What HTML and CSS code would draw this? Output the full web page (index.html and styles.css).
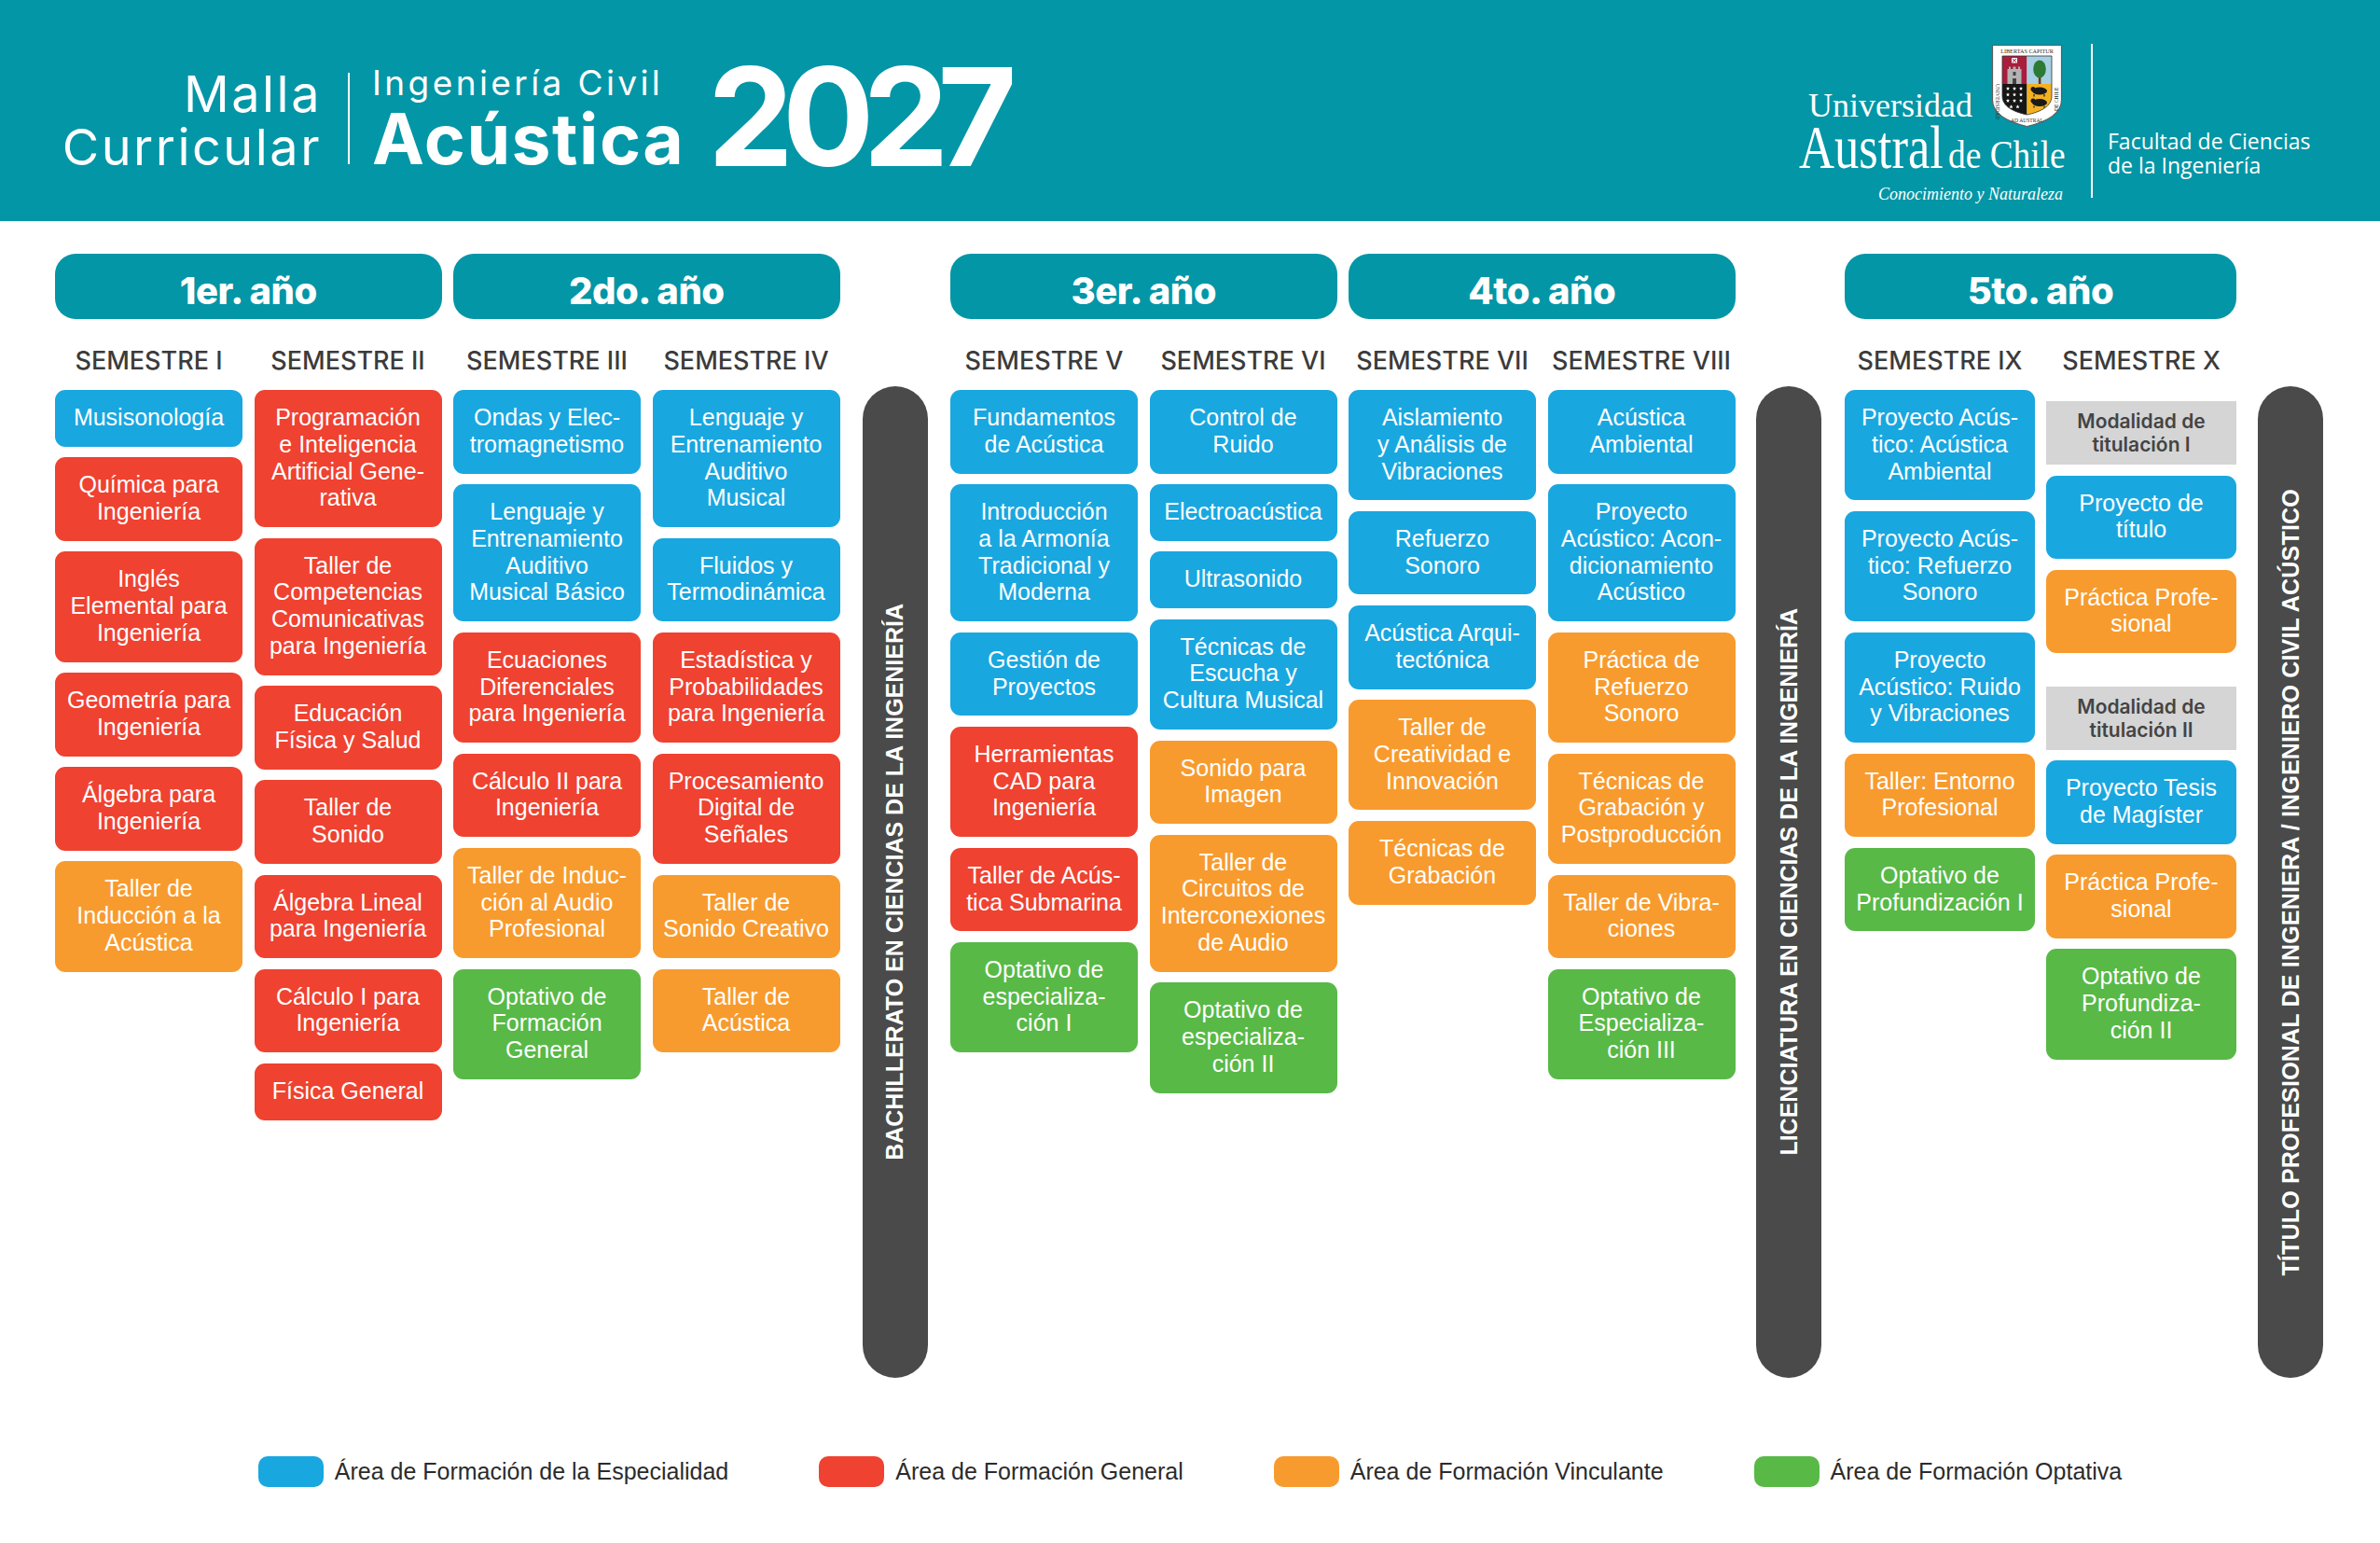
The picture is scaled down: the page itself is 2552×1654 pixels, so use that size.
FILE: index.html
```
<!DOCTYPE html>
<html lang="es">
<head>
<meta charset="utf-8">
<title>Malla Curricular Ingeniería Civil Acústica 2027</title>
<link rel="stylesheet" href="styles.css">
</head>
<body>
<header class="top">
  <div class="t-left">Malla<br>Curricular</div>
  <div class="t-div"></div>
  <div class="t-mid">
    <div class="t-sub">Ingeniería Civil</div>
    <div class="t-main">Acústica</div>
  </div>
  <div class="t-year">2027</div>
  <div class="brand">
    <div class="uach">
      <div class="uach-r1">
        <span class="u-univ">Universidad</span>
        <svg class="crest" viewBox="0 0 77 90" width="77" height="90">
          <defs>
            <clipPath id="shield"><path d="M12 13 H65 V56 C65 67 53 73 38.5 76 C24 73 12 67 12 56 Z"/></clipPath>
            <polygon id="st" points="0,-2.2 0.6,-0.7 2.1,-0.7 0.9,0.3 1.3,1.8 0,0.9 -1.3,1.8 -0.9,0.3 -2.1,-0.7 -0.6,-0.7" fill="#fff"/>
          </defs>
          <path d="M1.5 1.5 H75.5 V60 C75.5 76 58 84 38.5 88.5 C19 84 1.5 76 1.5 60 Z" fill="#fff" stroke="#5d5d5d" stroke-width="1.2"/>
          <text x="38.5" y="9.6" font-size="6.2" text-anchor="middle" font-family="Liberation Serif, serif" fill="#2a2a2a">LIBERTAS CAPITUR</text>
          <g clip-path="url(#shield)">
            <rect x="12" y="13" width="26.5" height="30" fill="#a81e3d"/>
            <rect x="38.5" y="13" width="26.5" height="30" fill="#a8cfe4"/>
            <rect x="12" y="43" width="26.5" height="40" fill="#161616"/>
            <rect x="38.5" y="43" width="26.5" height="40" fill="#f3b121"/>
          </g>
          <path d="M12 13 H65 V56 C65 67 53 73 38.5 76 C24 73 12 67 12 56 Z" fill="none" stroke="#333" stroke-width="0.8"/>
          <rect x="22" y="15" width="6" height="5.5" fill="#fff"/>
          <path d="M22.8 15.8 L27.2 19.7 M27.2 15.8 L22.8 19.7" stroke="#a81e3d" stroke-width="1"/>
          <path d="M17.5 43 V27 H19 V24.5 H21 V27 H23.5 V24.5 H26.5 V27 H29 V24.5 H31 V27 H32.5 V43 Z" fill="#b3b3b3"/>
          <rect x="23.5" y="30" width="3" height="4" fill="#444"/>
          <rect x="23" y="37" width="4" height="6" fill="#444"/>
          <rect x="50.8" y="35" width="2.6" height="8" fill="#6b3b1c"/>
          <ellipse cx="52" cy="27" rx="6.8" ry="9.5" fill="#2c7a33"/>
          <use href="#st" x="18" y="48"/><use href="#st" x="25" y="48"/><use href="#st" x="32" y="48"/>
          <use href="#st" x="18" y="54.5"/><use href="#st" x="25" y="54.5"/><use href="#st" x="32" y="54.5"/>
          <use href="#st" x="18" y="61"/><use href="#st" x="25" y="61"/><use href="#st" x="32" y="61"/>
          <use href="#st" x="21.5" y="67.5"/><use href="#st" x="28.5" y="67.5"/>
          <ellipse cx="52" cy="50.5" rx="8" ry="4" fill="#1a1a1a"/>
          <circle cx="45" cy="48.5" r="2.5" fill="#1a1a1a"/>
          <path d="M46 54 V56.5 M57 54 V56.5" stroke="#1a1a1a" stroke-width="1.2"/>
          <ellipse cx="52" cy="63" rx="8" ry="4" fill="#1a1a1a"/>
          <circle cx="45" cy="61" r="2.5" fill="#1a1a1a"/>
          <path d="M46 66.5 V68.5 M57 66.5 V68.5" stroke="#1a1a1a" stroke-width="1.2"/>
          <text transform="translate(5.2 43) rotate(90)" font-size="5.6" font-family="Liberation Serif, serif" fill="#2a2a2a">UNIVERSIDAD</text>
          <text x="38.5" y="83.5" font-size="5.6" text-anchor="middle" font-family="Liberation Serif, serif" fill="#2a2a2a">AD AUSTRAL</text>
          <text transform="translate(72.2 72) rotate(-90)" font-size="5.6" font-family="Liberation Serif, serif" fill="#2a2a2a">DE CHILE</text>
        </svg>
      </div>
      <div class="uach-r2"><span class="u-austral"><span class="u-austral-in">Austral</span></span><span class="u-chile">de Chile</span></div>
      <div class="uach-r3">Conocimiento y Naturaleza</div>
    </div>
    <div class="b-div"></div>
    <div class="fac"><div>Facultad de Ciencias</div><div>de la Ingeniería</div></div>
  </div>
</header>

<main class="board">
  <section class="grp g4">
    <div class="year">1er. año</div>
    <div class="year">2do. año</div>
    <div class="sem">SEMESTRE I</div>
    <div class="sem">SEMESTRE II</div>
    <div class="sem">SEMESTRE III</div>
    <div class="sem">SEMESTRE IV</div>
    <div class="col">
      <div class="box blue">Musisonología</div>
      <div class="box red">Química para<br>Ingeniería</div>
      <div class="box red">Inglés<br>Elemental para<br>Ingeniería</div>
      <div class="box red">Geometría para<br>Ingeniería</div>
      <div class="box red">Álgebra para<br>Ingeniería</div>
      <div class="box orange">Taller de<br>Inducción a la<br>Acústica</div>
    </div>
    <div class="col">
      <div class="box red">Programación<br>e Inteligencia<br>Artificial Gene-<br>rativa</div>
      <div class="box red">Taller de<br>Competencias<br>Comunicativas<br>para Ingeniería</div>
      <div class="box red">Educación<br>Física y Salud</div>
      <div class="box red">Taller de<br>Sonido</div>
      <div class="box red">Álgebra Lineal<br>para Ingeniería</div>
      <div class="box red">Cálculo I para<br>Ingeniería</div>
      <div class="box red">Física General</div>
    </div>
    <div class="col">
      <div class="box blue">Ondas y Elec-<br>tromagnetismo</div>
      <div class="box blue">Lenguaje y<br>Entrenamiento<br>Auditivo<br>Musical Básico</div>
      <div class="box red">Ecuaciones<br>Diferenciales<br>para Ingeniería</div>
      <div class="box red">Cálculo II para<br>Ingeniería</div>
      <div class="box orange">Taller de Induc-<br>ción al Audio<br>Profesional</div>
      <div class="box green">Optativo de<br>Formación<br>General</div>
    </div>
    <div class="col">
      <div class="box blue">Lenguaje y<br>Entrenamiento<br>Auditivo<br>Musical</div>
      <div class="box blue">Fluidos y<br>Termodinámica</div>
      <div class="box red">Estadística y<br>Probabilidades<br>para Ingeniería</div>
      <div class="box red">Procesamiento<br>Digital de<br>Señales</div>
      <div class="box orange">Taller de<br>Sonido Creativo</div>
      <div class="box orange">Taller de<br>Acústica</div>
    </div>
  </section>

  <div class="bar bar1"><span>BACHILLERATO EN CIENCIAS DE LA INGENIERÍA</span></div>

  <section class="grp g4">
    <div class="year">3er. año</div>
    <div class="year">4to. año</div>
    <div class="sem">SEMESTRE V</div>
    <div class="sem">SEMESTRE VI</div>
    <div class="sem">SEMESTRE VII</div>
    <div class="sem">SEMESTRE VIII</div>
    <div class="col">
      <div class="box blue">Fundamentos<br>de Acústica</div>
      <div class="box blue">Introducción<br>a la Armonía<br>Tradicional y<br>Moderna</div>
      <div class="box blue">Gestión de<br>Proyectos</div>
      <div class="box red">Herramientas<br>CAD para<br>Ingeniería</div>
      <div class="box red">Taller de Acús-<br>tica Submarina</div>
      <div class="box green">Optativo de<br>especializa-<br>ción I</div>
    </div>
    <div class="col">
      <div class="box blue">Control de<br>Ruido</div>
      <div class="box blue">Electroacústica</div>
      <div class="box blue">Ultrasonido</div>
      <div class="box blue">Técnicas de<br>Escucha y<br>Cultura Musical</div>
      <div class="box orange">Sonido para<br>Imagen</div>
      <div class="box orange">Taller de<br>Circuitos de<br>Interconexiones<br>de Audio</div>
      <div class="box green">Optativo de<br>especializa-<br>ción II</div>
    </div>
    <div class="col">
      <div class="box blue">Aislamiento<br>y Análisis de<br>Vibraciones</div>
      <div class="box blue">Refuerzo<br>Sonoro</div>
      <div class="box blue">Acústica Arqui-<br>tectónica</div>
      <div class="box orange">Taller de<br>Creatividad e<br>Innovación</div>
      <div class="box orange">Técnicas de<br>Grabación</div>
    </div>
    <div class="col">
      <div class="box blue">Acústica<br>Ambiental</div>
      <div class="box blue">Proyecto<br>Acústico: Acon-<br>dicionamiento<br>Acústico</div>
      <div class="box orange">Práctica de<br>Refuerzo<br>Sonoro</div>
      <div class="box orange">Técnicas de<br>Grabación y<br>Postproducción</div>
      <div class="box orange">Taller de Vibra-<br>ciones</div>
      <div class="box green">Optativo de<br>Especializa-<br>ción III</div>
    </div>
  </section>

  <div class="bar bar2"><span>LICENCIATURA EN CIENCIAS DE LA INGENIERÍA</span></div>

  <section class="grp g2">
    <div class="year">5to. año</div>
    <div class="sem">SEMESTRE IX</div>
    <div class="sem">SEMESTRE X</div>
    <div class="col">
      <div class="box blue">Proyecto Acús-<br>tico: Acústica<br>Ambiental</div>
      <div class="box blue">Proyecto Acús-<br>tico: Refuerzo<br>Sonoro</div>
      <div class="box blue">Proyecto<br>Acústico: Ruido<br>y Vibraciones</div>
      <div class="box orange">Taller: Entorno<br>Profesional</div>
      <div class="box green">Optativo de<br>Profundización I</div>
    </div>
    <div class="col">
      <div class="mod mod1">Modalidad de<br>titulación I</div>
      <div class="box blue">Proyecto de<br>título</div>
      <div class="box orange">Práctica Profe-<br>sional</div>
      <div class="mod mod2">Modalidad de<br>titulación II</div>
      <div class="box blue">Proyecto Tesis<br>de Magíster</div>
      <div class="box orange">Práctica Profe-<br>sional</div>
      <div class="box green">Optativo de<br>Profundiza-<br>ción II</div>
    </div>
  </section>

  <div class="bar bar3"><span class="wide">TÍTULO PROFESIONAL DE INGENIERA / INGENIERO CIVIL ACÚSTICO</span></div>
</main>

<footer class="legend">
  <div class="lg-item"><span class="sw blue"></span>Área de Formación de la Especialidad</div>
  <div class="lg-item"><span class="sw red"></span>Área de Formación General</div>
  <div class="lg-item"><span class="sw orange"></span>Área de Formación Vinculante</div>
  <div class="lg-item"><span class="sw green"></span>Área de Formación Optativa</div>
</footer>
</body>
</html>
```
FILE: styles.css
```
* { box-sizing: border-box; }
html, body { margin: 0; padding: 0; }
body {
  width: 2552px;
  height: 1654px;
  background: #ffffff;
  font-family: "Liberation Sans", Arial, sans-serif;
  overflow: hidden;
}

/* ---------- header ---------- */
.top {
  height: 237px;
  background: #0396a6;
  color: #ffffff;
  display: flex;
  align-items: flex-start;
}
.t-left {
  margin-top: 72px;
  width: 345px;
  padding-left: 50px;
  text-align: right;
  font-family: Inter, sans-serif;
  font-weight: 400;
  font-size: 54px;
  line-height: 57px;
  letter-spacing: 2.5px;
}
.t-div {
  width: 2px;
  height: 98px;
  margin: 78px 24px 0 28px;
  background: #ffffff;
}
.t-mid {
  margin-top: 70px;
  width: 338px;
  font-family: Inter, sans-serif;
  white-space: nowrap;
}
.t-sub {
  font-size: 37px;
  line-height: 37px;
  font-weight: 400;
  letter-spacing: 3.4px;
}
.t-main {
  font-size: 75px;
  line-height: 83px;
  font-weight: 700;
  letter-spacing: 1.5px;
}
.t-year {
  margin: 52px 0 0 22px;
  font-family: Inter, sans-serif;
  font-weight: 700;
  font-size: 146px;
  line-height: 146px;
  letter-spacing: -12px;
}

.brand {
  margin-left: auto;
  margin-top: 47px;
  padding-right: 67px;
  display: flex;
  align-items: flex-start;
}
.uach {
  width: 283px;
  font-family: "Liberation Serif", "Times New Roman", serif;
}
.uach-r1 {
  height: 90px;
  display: flex;
  justify-content: space-between;
  align-items: flex-end;
  padding-left: 10px;
}
.u-univ {
  font-size: 36px;
  line-height: 36px;
  margin-bottom: 6px;
}
.crest { display: block; }
.uach-r2 {
  font-size: 65px;
  line-height: 43px;
  white-space: nowrap;
}
.u-austral {
  display: inline-block;
  width: 160px;
  overflow: visible;
}
.u-austral-in {
  display: inline-block;
  transform: scaleX(0.81);
  transform-origin: left center;
}
.u-chile {
  display: inline-block;
  font-size: 42px;
  transform: scaleX(0.89);
  transform-origin: left center;
}
.uach-r3 {
  font-style: italic;
  font-size: 18px;
  line-height: 40px;
  text-align: right;
  white-space: nowrap;
}
.b-div {
  width: 2px;
  height: 165px;
  margin-left: 30px;
  background: #ffffff;
}
.fac {
  width: 225px;
  margin-left: 16px;
  margin-top: 91px;
  font-family: "Open Sans", sans-serif;
  font-size: 23px;
  line-height: 26px;
  white-space: nowrap;
}

/* ---------- board ---------- */
.board {
  display: flex;
  align-items: flex-start;
  padding: 35px 0 0 59px;
}
.grp {
  display: grid;
  grid-template-columns: repeat(4, 201px);
  column-gap: 12.5px;
  align-items: start;
}
.grp.g2 {
  grid-template-columns: repeat(2, 204px);
  column-gap: 12px;
}

.year {
  grid-column: span 2;
  height: 70px;
  border-radius: 22px;
  background: #0396a6;
  color: #ffffff;
  text-align: center;
  font-family: Inter, sans-serif;
  font-weight: 800;
  font-size: 40px;
  line-height: 61px;
  padding-top: 9px;
  letter-spacing: -0.5px;
}
.sem {
  margin: 30px 0 16px;
  height: 30px;
  line-height: 30px;
  text-align: center;
  white-space: nowrap;
  font-family: Inter, sans-serif;
  font-weight: 500;
  font-size: 27px;
  color: #3b3b3b;
}
.col {
  display: flex;
  flex-direction: column;
  gap: 11.5px;
}
.box {
  border-radius: 11px;
  padding: 15px 4px 17px;
  color: #ffffff;
  text-align: center;
  font-size: 25px;
  line-height: 28.8px;
  white-space: nowrap;
}
.blue { background: #19a7e0; }
.red { background: #ef4231; }
.orange { background: #f89b2e; }
.green { background: #58b947; }

.mod {
  height: 68px;
  padding-top: 9px;
  background: #d5d5d5;
  color: #444444;
  text-align: center;
  font-family: Inter, sans-serif;
  font-weight: 600;
  font-size: 21px;
  line-height: 25px;
  white-space: nowrap;
}
.mod1 { margin-top: 12px; }
.mod2 { margin-top: 24px; }

.bar {
  flex: none;
  width: 70px;
  height: 1063px;
  border-radius: 35px;
  background: #4a4a4a;
  display: flex;
  align-items: center;
  justify-content: center;
}
.bar1 { margin: 142px 24.5px 0 24px; }
.bar2 { margin: 142px 25px 0 22.5px; }
.bar3 { margin: 142px 0 0 23px; }
.bar span {
  writing-mode: vertical-rl;
  transform: rotate(180deg);
  color: #ffffff;
  font-weight: 700;
  font-size: 25px;
  white-space: nowrap;
}
.bar span.wide {
  font-size: 25px;
  letter-spacing: 0.2px;
}

/* ---------- legend ---------- */
.legend {
  margin-top: 84px;
  display: flex;
  justify-content: center;
  gap: 97px;
}
.lg-item {
  display: flex;
  align-items: center;
  gap: 12px;
  font-size: 25px;
  line-height: 33px;
  color: #2b2b2b;
  white-space: nowrap;
}
.sw {
  width: 70px;
  height: 33px;
  border-radius: 10px;
}
```
